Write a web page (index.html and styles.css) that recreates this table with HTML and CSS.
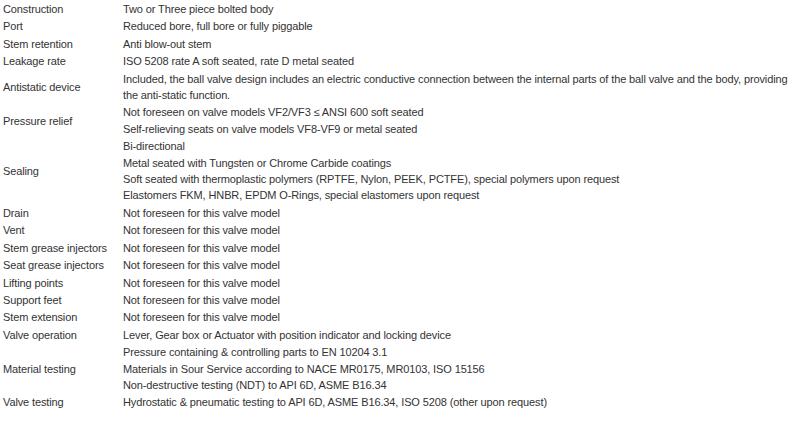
FILE: index.html
```html
<!DOCTYPE html>
<html>
<head>
<meta charset="utf-8">
<link rel="stylesheet" href="styles.css">
</head>
<body>
<table class="specs">
  <tr><td class="label">Construction</td><td class="value">Two or Three piece bolted body</td></tr>
  <tr><td class="label">Port</td><td class="value">Reduced bore, full bore or fully piggable</td></tr>
  <tr><td class="label">Stem retention</td><td class="value">Anti blow-out stem</td></tr>
  <tr><td class="label">Leakage rate</td><td class="value">ISO 5208 rate A soft seated, rate D metal seated</td></tr>
  <tr><td class="label">Antistatic device</td><td class="value">Included, the ball valve design includes an electric conductive connection between the internal parts of the ball valve and the body, providing the anti-static function.</td></tr>
  <tr><td class="label">Pressure relief</td><td class="value">Not foreseen on valve models VF2/VF3 ≤ ANSI 600 soft seated<br>Self-relieving seats on valve models VF8-VF9 or metal seated</td></tr>
  <tr><td class="label">Sealing</td><td class="value">Bi-directional<br>Metal seated with Tungsten or Chrome Carbide coatings<br>Soft seated with thermoplastic polymers (RPTFE, Nylon, PEEK, PCTFE), special polymers upon request<br>Elastomers FKM, HNBR, EPDM O-Rings, special elastomers upon request</td></tr>
  <tr><td class="label">Drain</td><td class="value">Not foreseen for this valve model</td></tr>
  <tr><td class="label">Vent</td><td class="value">Not foreseen for this valve model</td></tr>
  <tr><td class="label">Stem grease injectors</td><td class="value">Not foreseen for this valve model</td></tr>
  <tr><td class="label">Seat grease injectors</td><td class="value">Not foreseen for this valve model</td></tr>
  <tr><td class="label">Lifting points</td><td class="value">Not foreseen for this valve model</td></tr>
  <tr><td class="label">Support feet</td><td class="value">Not foreseen for this valve model</td></tr>
  <tr><td class="label">Stem extension</td><td class="value">Not foreseen for this valve model</td></tr>
  <tr><td class="label">Valve operation</td><td class="value">Lever, Gear box or Actuator with position indicator and locking device</td></tr>
  <tr><td class="label">Material testing</td><td class="value">Pressure containing &amp; controlling parts to EN 10204 3.1<br>Materials in Sour Service according to NACE MR0175, MR0103, ISO 15156<br>Non-destructive testing (NDT) to API 6D, ASME B16.34</td></tr>
  <tr><td class="label">Valve testing</td><td class="value">Hydrostatic &amp; pneumatic testing to API 6D, ASME B16.34, ISO 5208 (other upon request)</td></tr>
</table>
</body>
</html>
```
FILE: styles.css
```css
html, body {
  margin: 0;
  padding: 0;
  background: #fff;
}

.specs {
  width: 100%;
  border-collapse: separate;
  border-spacing: 0 1px;
  font-family: "Liberation Sans", Arial, sans-serif;
  font-size: 11px;
  line-height: 16.4px;
  letter-spacing: -0.12px;
  color: #333;
}

.specs td {
  padding: 0;
  vertical-align: middle;
}

.specs .label {
  width: 120px;
  padding-left: 3px;
  white-space: nowrap;
  box-sizing: border-box;
}

.specs .value {
  padding-left: 3px;
}
```
